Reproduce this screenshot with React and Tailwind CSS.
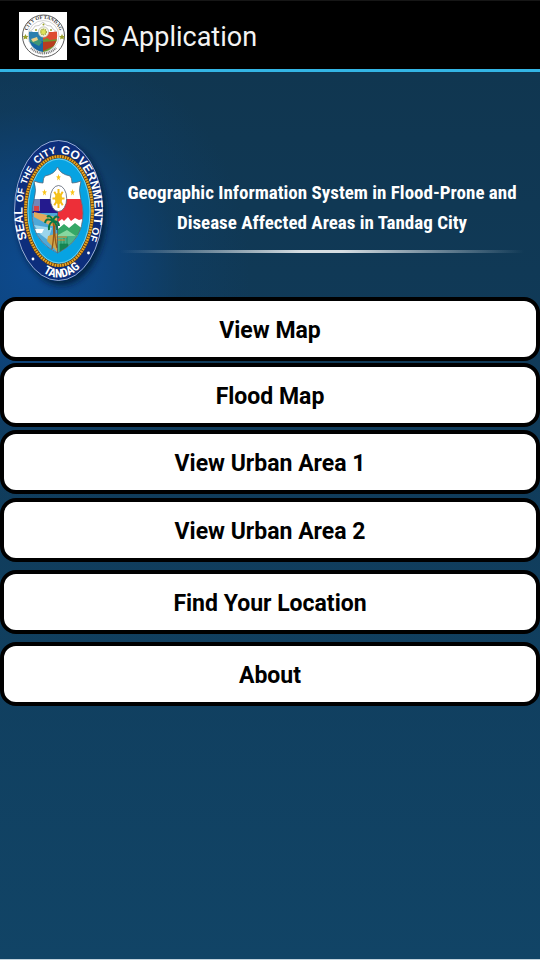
import React from "react";

const CX = 58.5;
const CY = 80.5;

function point(rx, ry, deg) {
  const t = (deg * Math.PI) / 180;
  return `${CX + rx * Math.sin(t)} ${CY - ry * Math.cos(t)}`;
}

const words = [
  { id: "w1", text: "SEAL", from: -147, to: -63, size: 12 },
  { id: "w2", text: "OF", from: -99, to: -49, size: 10 },
  { id: "w3", text: "THE", from: -79, to: -23, size: 9 },
  { id: "w4", text: "CITY", from: -54, to: 20, size: 10 },
  { id: "w5", text: "GOVERNMENT", from: -10, to: 112, size: 12 },
  { id: "w6", text: "OF", from: 92, to: 138, size: 10 },
];

const shieldPath =
  "M57.5 37 Q60 44 70 46 Q72 48 72 53 Q76 53 81 51 Q78 60 81 70 Q85 82 81 98 Q76 114 57.5 123 Q39 114 34 98 Q30 82 34 70 Q37 60 34 51 Q39 53 43 53 Q43 48 45 46 Q55 44 57.5 37Z";

function Star({ x, y, r = 3 }) {
  const pts = Array.from({ length: 10 }, (_, i) => {
    const a = (i * Math.PI) / 5;
    const d = i % 2 ? r * 0.42 : r;
    return `${x + d * 0.85 * Math.sin(a)},${y - d * 1.2 * Math.cos(a)}`;
  }).join(" ");
  return <polygon points={pts} fill="#f8c51c" />;
}

function SunRays({ x, y }) {
  return Array.from({ length: 8 }, (_, i) => {
    const a = (i * Math.PI) / 4;
    return (
      <line
        key={i}
        x1={x}
        y1={y}
        x2={x + 6 * Math.sin(a)}
        y2={y - 9.5 * Math.cos(a)}
        stroke="#f5bd18"
        strokeWidth="2"
      />
    );
  });
}

function CitySeal() {
  return (
    <svg viewBox="0 0 120 160" className="h-40 w-[120px] shrink-0" role="img" aria-label="Seal of the City Government of Tandag">
      <defs>
        <filter id="sealShadow" x="-20%" y="-20%" width="150%" height="150%">
          <feDropShadow dx="3" dy="4" stdDeviation="3" floodColor="#021530" floodOpacity="0.8" />
        </filter>
        {words.map((w) => (
          <path key={w.id} id={w.id} d={`M${point(36, 57, w.from)} A36 57 0 0 1 ${point(36, 57, w.to)}`} />
        ))}
        <path id="wb" d={`M${point(41, 67, 225)} A41 67 0 0 0 ${point(41, 67, 127)}`} />
        <clipPath id="shield">
          <path d={shieldPath} />
        </clipPath>
      </defs>
      <ellipse cx={CX} cy={CY} rx="44.5" ry="70.5" fill="#0a2f7c" filter="url(#sealShadow)" />
      <ellipse cx={CX} cy={CY} rx="44" ry="70" fill="none" stroke="#b9cde6" strokeWidth="0.8" />
      <g fill="#ffffff" fontFamily="Liberation Sans, sans-serif" fontWeight="700">
        {words.map((w) => (
          <text key={w.id} fontSize={w.size} textAnchor="middle">
            <textPath href={`#${w.id}`} startOffset="50%">{w.text}</textPath>
          </text>
        ))}
        <text fontSize="12" fontFamily="Roboto Condensed, Roboto, sans-serif" textAnchor="middle">
          <textPath href="#wb" startOffset="50%">TANDAG</textPath>
        </text>
      </g>
      <circle cx="33" cy="129" r="1.4" fill="#fff" />
      <circle cx="88.5" cy="123" r="1.4" fill="#fff" />
      <ellipse cx="59" cy="81" rx="33.5" ry="54.5" fill="#07a3e2" stroke="#6b400b" strokeWidth="3.6" />
      <ellipse cx="59" cy="81" rx="33.5" ry="54.5" fill="none" stroke="#e9a624" strokeWidth="2.8" strokeDasharray="1.7 0.9" />
      <ellipse cx="59" cy="81" rx="31" ry="52" fill="none" stroke="#8ddcf5" strokeWidth="0.8" />
      <g clipPath="url(#shield)">
        <rect x="30" y="35" width="56" height="90" fill="#ffffff" />
        <rect x="30" y="69" width="28" height="18" fill="#241a8e" />
        <path d="M32 69h8v12h-8z" fill="#7386b8" />
        <path d="M34 76h5v5h-5z" fill="#d94343" />
        <rect x="58" y="69" width="28" height="25" fill="#ed2f38" />
        <path d="M58 92l4-3 2 2 4-4 3 4 4-3 4 2 6-2v10H58z" fill="#ffffff" />
        <path d="M30 83h28v42H30z" fill="#4fa8d8" />
        <path d="M34 82l17 4 7 2v8l-7 0-17-9z" fill="#e5a95b" />
        <path d="M34 95l6 9 8 6 4-12z" fill="#9bd5ec" />
        <path d="M35 99h9l-2 4h-6z" fill="#ffffff" />
        <path d="M58 99l6-5 5 4 6-5 9 7v8H58z" fill="#35a867" />
        <path d="M58 105l9-5 9 6 8-5v8H58z" fill="#87d8a0" />
        <path d="M58 106h26v19H58z" fill="#4ab48a" />
        <path d="M58 103l-10 3-1 5 6 6 5 6z" fill="#cfa64b" />
        <path d="M60 114h8v8h-8zM61 109v9m3-10v11m3-12v10" fill="#168452" stroke="#168452" strokeWidth="0.7" />
        <path d="M55 107h12M56 110h9" stroke="#df862c" strokeWidth="1" />
        <path d="M53 91q2 12-1 28M55 94q-1 13 2 24" fill="none" stroke="#965718" strokeWidth="1.3" />
        <path d="M53 91q-7-4-8 2M53 91q-3-7-6-4M53 91q2-7 6-3M53 91q6 0 6 5M53 91q-5 3-4 9M53 91q5 4 4 9" fill="none" stroke="#087944" strokeWidth="2" />
        <path d="M57.5 82v43" stroke="#34516b" strokeWidth="0.7" />
      </g>
      <path d={shieldPath} fill="none" stroke="#50677c" strokeWidth="0.8" />
      <ellipse cx="58.5" cy="68.5" rx="8.2" ry="13" fill="#fff" stroke="#596171" strokeWidth="0.8" />
      <SunRays x={58.5} y={68.5} />
      <ellipse cx="58.5" cy="68.5" rx="3.6" ry="5.7" fill="#f5c21b" />
      <Star x={58.5} y={47.5} />
      <Star x={44.5} y={62.5} />
      <Star x={72.5} y={62.5} />
    </svg>
  );
}

function AppLogo() {
  return (
    <svg viewBox="0 0 48 48" className="size-12 shrink-0" role="img" aria-label="City of Tandag">
      <defs>
        <path id="logoTop" d="M8.3 29A17 17 0 1 1 40.7 29" />
        <clipPath id="logoShield">
          <path d="M10 20q3-1 4 0h20q2-1 4 0 1 9-3 14-4 5-11 6-7-1-11-6-4-5-3-14z" />
        </clipPath>
      </defs>
      <rect width="48" height="48" fill="#fff" />
      <circle cx="24.5" cy="24" r="21" fill="none" stroke="#4a4a4a" strokeWidth="0.9" />
      <circle cx="24.5" cy="24" r="15.5" fill="none" stroke="#b5b5b5" strokeWidth="0.6" />
      <text fontSize="5" fontWeight="700" fontFamily="Liberation Serif, serif" fill="#333" textAnchor="middle">
        <textPath href="#logoTop" startOffset="50%">CITY OF TANDAG</textPath>
      </text>
      <path d="M12 36A17.5 17.5 0 0 0 37 36" fill="none" stroke="#777" strokeWidth="2.4" strokeDasharray="1 0.8" />
      <path d="M10 20q5-3 6-6 4 1 8-4 4 5 8 4 1 3 6 6" fill="#fff" stroke="#aaa" strokeWidth="0.6" />
      <g clipPath="url(#logoShield)">
        <path d="M9 19h15v11H9z" fill="#2c7fae" />
        <path d="M24 19h16v11H24z" fill="#df4b32" />
        <path d="M9 29h15v12H9z" fill="#1768a3" />
        <path d="M24 28l4-2 3 2 8-1v14H24z" fill="#6a9931" />
        <path d="M24 30l13-1-2 5-11 5z" fill="#b83c20" />
        <path d="M10 29l8-3 5 4-3 4z" fill="#3f9678" />
        <path d="M12 27l6-2 1 3-5 2z" fill="#eed086" />
      </g>
      <circle cx="24.5" cy="20" r="5.2" fill="#f5f5df" stroke="#aaa" strokeWidth="0.6" />
      <circle cx="24.5" cy="20" r="2.8" fill="#dfe25a" stroke="#8f982f" strokeWidth="1.2" strokeDasharray="1 0.8" />
      <g fill="#9aa02a">
        <path d="M6.5 22l1 2h2l-1.5 1.5.5 2-2-1-2 1 .5-2L3.5 24h2zM43 22l1 2h2l-1.5 1.5.5 2-2-1-2 1 .5-2L40 24h2z" />
        <circle cx="24.5" cy="12.5" r="1" />
        <circle cx="17" cy="18" r="1" />
        <circle cx="32" cy="18" r="1" />
      </g>
    </svg>
  );
}

function MenuButton({ children, className = "" }) {
  return (
    <button
      type="button"
      className={`h-16 w-full rounded-2xl border-4 border-black bg-white pt-1 text-[23px] leading-7 font-bold text-black ${className}`}
    >
      {children}
    </button>
  );
}

export default function App() {
  return (
    <div className="flex min-h-screen flex-col border-b border-[#c3d3dd] bg-[#114466] font-['Roboto','Liberation_Sans',sans-serif]">
      <header className="flex h-[72px] items-center gap-1.5 border-t border-b-3 border-t-[#161616] border-b-[#33b5e5] bg-black pt-0.5 pl-[19px]">
        <AppLogo />
        <h1 className="pt-0.5 text-[27px] leading-8 text-[#f3f3f3]">GIS Application</h1>
      </header>
      <main className="grow bg-[radial-gradient(220px_240px_at_30px_200px,#0d4a8e_0%,#0d488acc_30%,#0f3f6a66_68%,transparent_100%),linear-gradient(#103650,#103a58_30%,#114466)]">
        <section className="flex h-[225px] items-end pb-[7px]">
          <CitySeal />
          <div className="flex h-28 min-w-0 grow flex-col items-center pr-4">
            <h2 className="text-center font-['Roboto_Condensed','Roboto','Liberation_Sans',sans-serif] text-[19px] leading-[30px] font-bold whitespace-nowrap text-white">
              Geographic Information System in Flood-Prone and
              <br />
              Disease Affected Areas in Tandag City
            </h2>
            <div className="mt-3 h-[3px] w-full bg-[linear-gradient(90deg,transparent,#d5dde2_45%,#d5dde2_55%,transparent)]" />
          </div>
        </section>
        <nav aria-label="Main menu">
          <MenuButton>View Map</MenuButton>
          <MenuButton className="mt-0.5">Flood Map</MenuButton>
          <MenuButton className="mt-[3px]">View Urban Area 1</MenuButton>
          <MenuButton className="mt-1">View Urban Area 2</MenuButton>
          <MenuButton className="mt-2">Find Your Location</MenuButton>
          <MenuButton className="mt-2">About</MenuButton>
        </nav>
      </main>
    </div>
  );
}
